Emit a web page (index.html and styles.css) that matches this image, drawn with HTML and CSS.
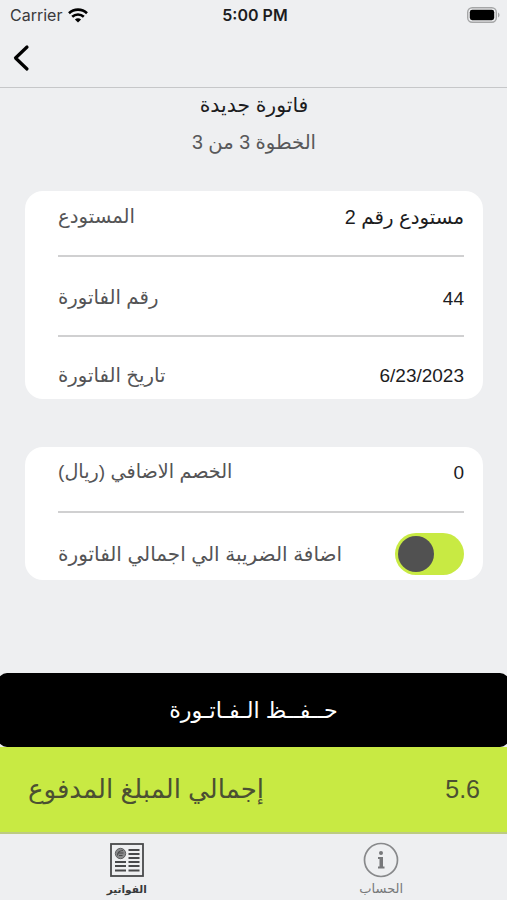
FILE: index.html
```html
<!DOCTYPE html>
<html lang="ar">
<head>
  <meta charset="UTF-8" />
  <meta name="viewport" content="width=device-width, initial-scale=1" />
  <title>فاتورة جديدة</title>
  <link rel="stylesheet" href="styles.css">
</head>
<body>

  <div class="status-bar">
    <div class="carrier">
      <span>Carrier</span>
      <svg width="20" height="15" viewBox="0 0 20 15" fill="none" stroke="#000" stroke-width="2.6">
        <path d="M1 5.2C6 .4 14 .4 19 5.2" />
        <path d="M4.2 8.8c3.3-3.1 8.3-3.1 11.6 0" />
        <path d="M10 14.6 6.9 11.5c1.7-1.6 4.5-1.6 6.2 0z" fill="#000" stroke="none" />
      </svg>
    </div>
    <div class="time">5:00 PM</div>
    <div class="battery">
      <svg width="33" height="16" viewBox="0 0 33 16">
        <rect x=".7" y=".7" width="28.6" height="14.6" rx="4.5" fill="none" stroke="#a5a6a7" stroke-width="1.4" />
        <rect x="2.8" y="2.8" width="24.4" height="10.4" rx="2.4" fill="#000" />
        <path d="M31 5.5c2 .8 2 4.2 0 5z" fill="#a5a6a7" />
      </svg>
    </div>
  </div>

  <div class="nav-bar">
    <svg width="18" height="28" viewBox="0 0 18 28" fill="none" stroke="#000" stroke-width="3.2" stroke-linecap="round" stroke-linejoin="round">
      <path d="M15 3 3.5 14 15 25" />
    </svg>
  </div>

  <main>
    <h1 dir="rtl">فاتورة جديدة</h1>
    <p class="step" dir="rtl">الخطوة 3 من 3</p>

    <div class="card">
      <div class="row first">
        <span class="label" dir="rtl">المستودع</span>
        <span class="value arabic" dir="rtl">مستودع رقم 2</span>
      </div>
      <div class="row">
        <span class="label" dir="rtl">رقم الفاتورة</span>
        <span class="value">44</span>
      </div>
      <div class="row last">
        <span class="label" dir="rtl">تاريخ الفاتورة</span>
        <span class="value">6/23/2023</span>
      </div>
    </div>

    <div class="card extra">
      <div class="row first">
        <span class="label discount" dir="rtl">الخصم الاضافي (ريال)</span>
        <span class="value">0</span>
      </div>
      <div class="row last">
        <span class="label tax" dir="rtl">اضافة الضريبة الي اجمالي الفاتورة</span>
        <div class="toggle"><div class="knob"></div></div>
      </div>
    </div>
  </main>

  <button class="save" dir="rtl">حــفــظ الـفـاتـورة</button>

  <div class="total">
    <span class="total-label" dir="rtl">إجمالي المبلغ المدفوع</span>
    <span class="amount">5.6</span>
  </div>

  <div class="tab-bar">
    <div class="tab active">
      <svg width="34" height="36" viewBox="0 -1 34 36" fill="none" stroke="#48494b" stroke-width="1.8">
        <rect x="1" y="1" width="32" height="32" />
        <circle cx="10.5" cy="10.5" r="5.2" fill="#88898b" stroke="#606163" stroke-width="1" />
        <path d="M7.500 12.500c0-3 2-5 5.500-5M8 10h5.500M9 12.500h3.500" stroke-width="1.1" />
        <path d="M18.500 7h11M18.500 11h11M18.500 15h11M5 19h11M18.500 19h11M5 23h11M18.500 23h11M5 27.500h11M18.500 27.500h11" />
      </svg>
      <span dir="rtl">الفواتير</span>
    </div>
    <div class="tab">
      <svg width="36" height="36" viewBox="0 0 36 36" fill="none" stroke="#88898b">
        <circle cx="18" cy="18" r="16.5" stroke-width="1.7" />
        <circle cx="18" cy="11" r="2" fill="#77787a" stroke="none" />
        <path d="M15 15h5v9.500h1.500V26.500h-6.500v-2h1.500V17H15z" fill="#77787a" stroke="none" />
      </svg>
      <span dir="rtl">الحساب</span>
    </div>
  </div>

</body>
</html>
```
FILE: styles.css
```css
* {
  box-sizing: border-box;
}
body {
  display: flex;
  flex-direction: column;
  height: 900px;
  margin: 0;
  overflow: hidden;
  background: #eeeff1;
  color: #1c1c1e;
  font-family: "Liberation Sans", "DejaVu Sans", sans-serif;
}
svg {
  display: block;
}
.status-bar {
  display: grid;
  grid-template-columns: 1fr auto 1fr;
  align-items: center;
  height: 30px;
  padding: 0 7px 0 10px;
  font-family: Inter, sans-serif;
  font-size: 16px;
}
.carrier {
  display: flex;
  align-items: center;
  gap: 6px;
  color: #3a3a3c;
}
.time {
  font-weight: 600;
}
.battery {
  justify-self: end;
  padding-bottom: 1px;
}
.nav-bar {
  height: 58px;
  padding: 14px 12px;
  border-bottom: 1px solid #c6c7c9;
}
main {
  flex: 1;
  padding: 0 24px 0 25px;
}
h1 {
  margin: 0;
  height: 36px;
  line-height: 35px;
  text-align: center;
  font-size: 20.4px;
  font-weight: normal;
}
.step {
  margin: 0;
  height: 36px;
  line-height: 36px;
  text-align: center;
  font-size: 19.6px;
  color: #58585a;
}
.card {
  margin-top: 31px;
  padding: 0 19px 0 33px;
  background: #fff;
  border-radius: 18px;
}
.card.extra {
  margin-top: 48px;
}
.row {
  display: flex;
  align-items: center;
  justify-content: space-between;
  height: 80px;
  padding-top: 2px;
  border-bottom: 2px solid #d0d0d1;
}
.row.first {
  height: 66px;
  padding-top: 0;
  padding-bottom: 15px;
}
.row.last {
  height: 62px;
  padding-top: 17px;
  border-bottom: none;
  align-items: flex-start;
}
.extra .row.last {
  height: 67px;
  padding-top: 20px;
}
.label {
  font-size: 19.7px;
  line-height: 42px;
  color: #545456;
}
.label.discount {
  font-size: 19.2px;
}
.label.tax {
  font-size: 20px;
}
.value {
  padding-top: 3px;
  font-size: 19px;
}
.value.arabic {
  font-size: 19.8px;
}
.row.last .value {
  padding-top: 1px;
  line-height: 42px;
}
.toggle {
  width: 69px;
  height: 42px;
  padding: 3px;
  border-radius: 21px;
  background: #c8ea43;
}
.knob {
  width: 36px;
  height: 36px;
  border-radius: 50%;
  background: #515151;
}
.save {
  height: 74px;
  margin: 0 -2px;
  border: none;
  border-radius: 9px;
  background: #000;
  color: #fff;
  font-family: inherit;
  font-size: 22.2px;
}
.total {
  display: flex;
  align-items: center;
  justify-content: space-between;
  height: 87px;
  padding: 0 27px 0 28px;
  border-bottom: 2px solid #bdcb82;
  background: #c8ea43;
  color: #4b5032;
  font-size: 25px;
}
.total-label {
  font-size: 26px;
}
.tab-bar {
  display: grid;
  grid-template-columns: 1fr 1fr;
  height: 66px;
}
.tab {
  display: flex;
  flex-direction: column;
  align-items: center;
  gap: 3px;
  padding-top: 8px;
  color: #77787a;
  font-size: 13px;
  line-height: 16px;
}
.tab:last-child {
  padding-left: 2px;
}
.tab.active {
  color: #38393b;
  font-size: 10.500px;
  font-weight: bold;
}
```
